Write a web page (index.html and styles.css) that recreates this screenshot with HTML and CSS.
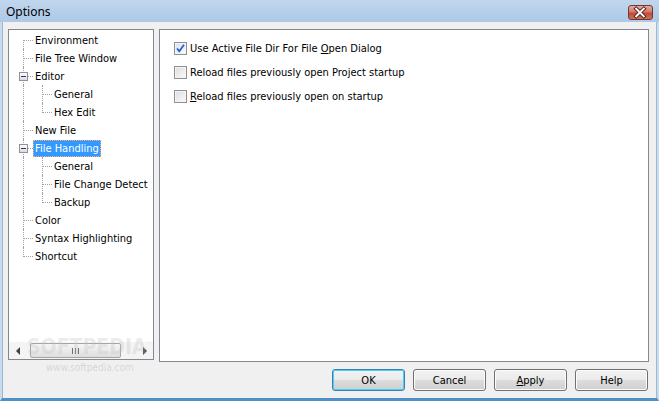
FILE: index.html
```html
<!DOCTYPE html>
<html lang="en">
<head>
  <meta charset="UTF-8" />
  <title>Options</title>
  <link rel="stylesheet" href="styles.css">
</head>
<body>
  <div class="window">
    <div class="titlebar">
      <span class="title">Options</span>
      <span class="close">
        <svg width="25" height="15" viewBox="0 0 25 15">
          <path d="M8.5 3.5 L16.5 11.5 M16.5 3.5 L8.5 11.5" stroke="#5b2620" stroke-width="4" stroke-linecap="square"/>
          <path d="M8.5 3.5 L16.5 11.5 M16.5 3.5 L8.5 11.5" stroke="#ffffff" stroke-width="2" stroke-linecap="square"/>
        </svg>
      </span>
    </div>

    <div class="client">
      <div class="main">
        <div class="tree">
          <ul class="tree-list">
            <li class="row"><span class="g first"></span><span class="label">Environment</span></li>
            <li class="row"><span class="g tee"></span><span class="label">File Tree Window</span></li>
            <li class="row"><span class="g tee"><span class="exp"></span></span><span class="label">Editor</span></li>
            <li class="row"><span class="g pipe"></span><span class="g tee"></span><span class="label">General</span></li>
            <li class="row"><span class="g pipe"></span><span class="g last"></span><span class="label">Hex Edit</span></li>
            <li class="row"><span class="g tee"></span><span class="label">New File</span></li>
            <li class="row"><span class="g tee"><span class="exp"></span></span><span class="label selected">File Handling</span></li>
            <li class="row"><span class="g pipe"></span><span class="g tee"></span><span class="label">General</span></li>
            <li class="row"><span class="g pipe"></span><span class="g tee"></span><span class="label">File Change Detect</span></li>
            <li class="row"><span class="g pipe"></span><span class="g last"></span><span class="label">Backup</span></li>
            <li class="row"><span class="g tee"></span><span class="label">Color</span></li>
            <li class="row"><span class="g tee"></span><span class="label">Syntax Highlighting</span></li>
            <li class="row"><span class="g last"></span><span class="label">Shortcut</span></li>
          </ul>
          <div class="hscroll">
            <span class="arrow left"></span>
            <span class="track">
              <span class="thumb"><span class="grip"></span></span>
            </span>
            <span class="arrow right"></span>
          </div>
          <div class="watermark">SOFTPEDIA<sup>™</sup></div>
        </div>

        <div class="panel">
          <label class="check"><span class="box checked">
            <svg width="11" height="11" viewBox="0 0 11 11"><path d="M2 5.5 L4.3 8.2 L9 1.8" fill="none" stroke="#2a5fc8" stroke-width="1.8"/></svg>
          </span><span class="text">Use Active File Dir For File <u>O</u>pen Dialog</span></label>
          <label class="check"><span class="box"></span><span class="text">Reload files previously open Project startup</span></label>
          <label class="check"><span class="box"></span><span class="text"><u>R</u>eload files previously open on startup</span></label>
        </div>
      </div>

      <div class="footer">
        <span class="site">www.softpedia.com</span>
        <div class="buttons">
          <button class="btn default">OK</button>
          <button class="btn">Cancel</button>
          <button class="btn"><u>A</u>pply</button>
          <button class="btn">Help</button>
        </div>
      </div>
    </div>
  </div>
</body>
</html>
```

FILE: styles.css
```css
*, *::before, *::after {
  box-sizing: border-box;
}

body {
  margin: 0;
  width: 659px;
  height: 401px;
  overflow: hidden;
  font-family: "DejaVu Sans Condensed", "DejaVu Sans", sans-serif;
  font-size: 11px;
  color: #000;
}

.window {
  width: 659px;
  height: 401px;
  display: flex;
  flex-direction: column;
  background: #f0f0f0;
  border-left: 2px solid #c9dcef;
  border-right: 2px solid #c9dcef;
  border-bottom: 3px solid #4f8fc9;
}

/* Title bar */
.titlebar {
  height: 22px;
  flex: none;
  display: flex;
  align-items: center;
  justify-content: space-between;
  margin: 0 -2px;
  padding: 0 6px;
  background: linear-gradient(#c0d6ed, #adc9e6);
}

.title {
  font-family: "Noto Sans", "Open Sans", sans-serif;
  font-size: 12px;
  color: #000;
}

.close {
  width: 25px;
  height: 15px;
  margin-top: 3px;
  border: 1px solid #6e3a36;
  border-radius: 3px;
  background: linear-gradient(#e7a99c 0%, #d7796a 45%, #c24a37 55%, #d0705c 100%);
  display: flex;
  overflow: hidden;
}

.close svg {
  margin: -1px 0 0 -1px;
}

/* Client area */
.client {
  flex: 1;
  display: flex;
  flex-direction: column;
  padding: 7px 7px 0 5px;
  border-left: 1px solid #9fb7cf;
  border-right: 1px solid #9fb7cf;
}

.main {
  display: flex;
  align-items: flex-start;
  gap: 5px;
}

/* Tree */
.tree {
  position: relative;
  width: 146px;
  height: 331px;
  flex: none;
  background: #fff;
  border: 1px solid #828790;
  display: flex;
  flex-direction: column;
  overflow: hidden;
}

.tree-list {
  list-style: none;
  margin: 0;
  padding: 1px 0 0 5px;
  flex: 1;
  overflow: hidden;
}

.row {
  display: flex;
  align-items: center;
  height: 18px;
  white-space: nowrap;
}

.g {
  position: relative;
  width: 19px;
  height: 18px;
  flex: none;
}

.g::before {
  content: "";
  position: absolute;
  left: 9px;
  top: 0;
  height: 18px;
  border-left: 1px dotted #a0a0a0;
}

.g.first::before {
  top: 9px;
  height: 9px;
}

.g.last::before {
  height: 10px;
}

.g.tee::after,
.g.first::after,
.g.last::after {
  content: "";
  position: absolute;
  left: 10px;
  top: 9px;
  width: 9px;
  border-top: 1px dotted #a0a0a0;
}

.exp {
  position: absolute;
  z-index: 1;
  left: 5px;
  top: 5px;
  width: 9px;
  height: 9px;
  border: 1px solid #919191;
  background: linear-gradient(#ffffff, #dcdcdc);
}

.exp::after {
  content: "";
  position: absolute;
  left: 1px;
  top: 3px;
  width: 5px;
  height: 1px;
  background: #1f3b7a;
}

.label {
  padding: 0 2px;
  height: 17px;
  line-height: 17px;
  color: #000;
}

.label.selected {
  background: #3399ff;
  color: #fff;
  outline: 1px dotted #ffb070;
  outline-offset: -1px;
}

.hscroll {
  height: 17px;
  flex: none;
  display: flex;
  align-items: center;
  background: #f4f4f4;
}

.arrow {
  width: 17px;
  height: 17px;
  flex: none;
  display: flex;
  align-items: center;
  justify-content: center;
}

.arrow::before {
  content: "";
  border-top: 4px solid transparent;
  border-bottom: 4px solid transparent;
}

.arrow.left::before {
  border-right: 4px solid #404040;
}

.arrow.right::before {
  border-left: 4px solid #404040;
}

.track {
  flex: 1;
  height: 17px;
  display: flex;
  align-items: center;
}

.thumb {
  width: 91px;
  height: 15px;
  margin-left: 4px;
  border: 1px solid #a5a5a5;
  border-radius: 2px;
  background: linear-gradient(#f6f6f6, #dedede);
  display: flex;
  align-items: center;
  justify-content: center;
}

.grip {
  width: 7px;
  height: 6px;
  background: repeating-linear-gradient(90deg, #6f6f6f 0 1px, transparent 1px 3px);
}

.watermark {
  position: absolute;
  z-index: 2;
  left: 18px;
  bottom: 0;
  font-family: "DejaVu Sans Condensed", sans-serif;
  font-size: 21px;
  font-weight: bold;
  color: rgba(190, 190, 190, 0.3);
  pointer-events: none;
  white-space: nowrap;
}

.watermark sup {
  font-size: 6px;
}

/* Right panel */
.panel {
  flex: 1;
  height: 333px;
  background: #fff;
  border: 1px solid #828790;
  padding: 12px 0 0 14px;
  display: flex;
  flex-direction: column;
  gap: 11px;
}

.check {
  display: flex;
  align-items: center;
  gap: 3px;
  height: 13px;
}

.text {
  white-space: nowrap;
}

.box {
  width: 13px;
  height: 13px;
  flex: none;
  border: 1px solid #8e8f8f;
  background: linear-gradient(135deg, #dcdcdc, #fbfbfb);
  box-shadow: inset 0 0 0 1px #f4f4f4;
  display: flex;
  align-items: center;
  justify-content: center;
}

.box.checked {
  background: linear-gradient(135deg, #d6e3f3, #fbfcfe);
}

/* Footer */
.footer {
  position: relative;
  display: flex;
  justify-content: flex-end;
  padding-top: 7px;
}

.site {
  position: absolute;
  left: 38px;
  top: 0;
  font-size: 10px;
  color: rgba(180, 180, 180, 0.45);
}

.buttons {
  display: flex;
  gap: 8px;
  margin-right: 1px;
}

.btn {
  width: 73px;
  height: 22px;
  font-family: "DejaVu Sans Condensed", "DejaVu Sans", sans-serif;
  font-size: 11px;
  color: #000;
  border: 1px solid #707070;
  border-radius: 3px;
  background: linear-gradient(#f2f2f2 0%, #ebebeb 50%, #dddddd 51%, #cfcfcf 100%);
  box-shadow: inset 0 0 0 1px #fcfcfc;
  padding: 0;
}

.btn.default {
  border-color: #3c7fb1;
  box-shadow: inset 0 0 0 1px #48d1f8;
}
```
